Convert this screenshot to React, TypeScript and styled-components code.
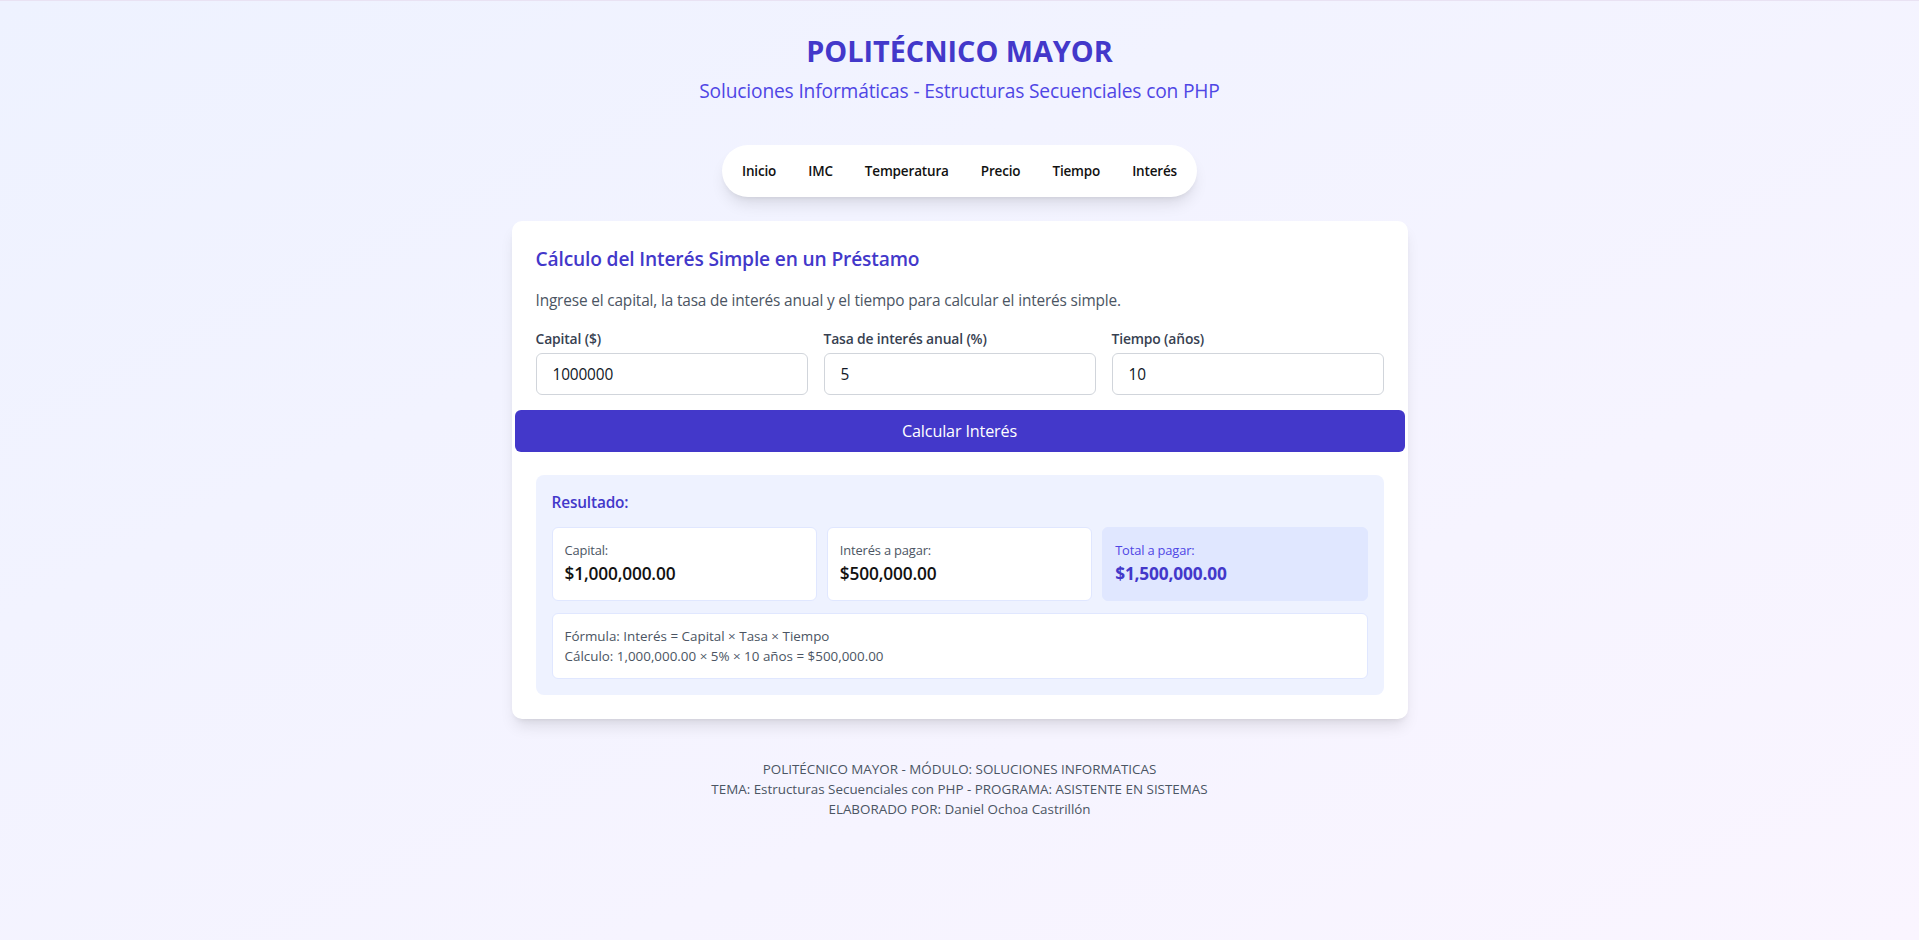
import React from "react";
import styled, { createGlobalStyle } from "styled-components";

const GlobalStyle = createGlobalStyle`
  html, body {
    margin: 0;
    padding: 0;
  }
  body {
    font-family: "Open Sans", "Noto Sans", Arial, sans-serif;
    letter-spacing: -0.01em;
    -webkit-font-smoothing: antialiased;
  }
  * {
    box-sizing: border-box;
  }
`;

const Page = styled.div`
  min-height: 100vh;
  border-top: 1px solid #e9e2f3;
  background: linear-gradient(to bottom right, #eef2ff, #faf5ff);
  padding: 32px 16px;
`;

const Header = styled.header`
  text-align: center;
  margin-bottom: 40px;
`;

const Title = styled.h1`
  margin: 0 0 8px;
  font-size: 28.8px;
  line-height: 36px;
  font-weight: 700;
  letter-spacing: 0;
  color: #4338ca;
`;

const Subtitle = styled.p`
  margin: 0;
  font-size: 19.2px;
  line-height: 28px;
  color: #4f46e5;
`;

const NavWrap = styled.div`
  display: flex;
  justify-content: center;
  margin-bottom: 24px;
`;

const Nav = styled.nav`
  display: flex;
  background: #ffffff;
  border-radius: 9999px;
  padding: 8px 4px;
  box-shadow: 0 10px 15px -3px rgba(0, 0, 0, 0.1), 0 4px 6px -4px rgba(0, 0, 0, 0.1);
`;

const NavLink = styled.a`
  padding: 8px 16px;
  font-size: 13.5px;
  line-height: 20px;
  font-weight: 600;
  color: #111111;
  text-decoration: none;
  cursor: pointer;
`;

const Card = styled.main`
  max-width: 896px;
  margin: 0 auto;
  background: #ffffff;
  border-radius: 10px;
  padding: 24px;
  box-shadow: 0 10px 15px -3px rgba(0, 0, 0, 0.1), 0 4px 6px -4px rgba(0, 0, 0, 0.1);
`;

const CardTitle = styled.h2`
  margin: 0 0 16px;
  font-size: 19.2px;
  line-height: 28px;
  font-weight: 600;
  color: #4338ca;
`;

const Description = styled.p`
  margin: 0 0 16px;
  font-size: 15.4px;
  line-height: 24px;
  color: #4b5563;
`;

const FieldGrid = styled.div`
  display: grid;
  grid-template-columns: repeat(3, 1fr);
  gap: 16px;
`;

const Field = styled.div`
  display: flex;
  flex-direction: column;
`;

const Label = styled.label`
  display: block;
  margin-bottom: 4px;
  font-size: 13.9px;
  line-height: 20px;
  font-weight: 600;
  color: #374151;
`;

const Input = styled.input`
  width: 100%;
  height: 42px;
  padding: 8px 16px;
  border: 1px solid #d1d5db;
  border-radius: 6px;
  font-family: inherit;
  font-size: 15.4px;
  letter-spacing: -0.01em;
  color: #111827;
  background: #ffffff;
  outline: none;
`;

const Button = styled.button`
  display: block;
  width: calc(100% + 42px);
  height: 42px;
  margin: 15px -21px 0;
  border: none;
  border-radius: 6px;
  background: #4338ca;
  color: #ffffff;
  font-family: inherit;
  font-size: 16.2px;
  letter-spacing: -0.01em;
  cursor: pointer;
`;

const Result = styled.section`
  margin-top: 23px;
  background: #eef2ff;
  border-radius: 8px;
  padding: 16px;
`;

const ResultTitle = styled.h3`
  margin: 0 0 12px;
  font-size: 15.4px;
  line-height: 24px;
  font-weight: 600;
  color: #4338ca;
`;

const StatGrid = styled.div`
  display: grid;
  grid-template-columns: repeat(3, 1fr);
  gap: 10px;
`;

const Stat = styled.div<{ $highlight?: boolean }>`
  padding: 12px;
  border-radius: 6px;
  border: 1px solid #e0e7ff;
  background: ${(p) => (p.$highlight ? "#e0e7ff" : "#ffffff")};
`;

const StatLabel = styled.div<{ $highlight?: boolean }>`
  font-size: 12.9px;
  line-height: 20px;
  color: ${(p) => (p.$highlight ? "#4f46e5" : "#4b5563")};
`;

const StatValue = styled.div<{ $highlight?: boolean }>`
  font-size: 17.3px;
  line-height: 28px;
  font-weight: ${(p) => (p.$highlight ? 700 : 600)};
  color: ${(p) => (p.$highlight ? "#4338ca" : "#111111")};
`;

const Formula = styled.div`
  margin-top: 12px;
  padding: 12px;
  background: #ffffff;
  border: 1px solid #e0e7ff;
  border-radius: 6px;
  font-size: 13.4px;
  line-height: 20px;
  letter-spacing: 0;
  color: #4b5563;
`;

const Footer = styled.footer`
  margin-top: 40px;
  text-align: center;
  font-size: 13.4px;
  line-height: 20px;
  letter-spacing: 0;
  color: #4b5563;
`;

const navItems = ["Inicio", "IMC", "Temperatura", "Precio", "Tiempo", "Interés"];

const stats = [
  { label: "Capital:", value: "$1,000,000.00" },
  { label: "Interés a pagar:", value: "$500,000.00" },
  { label: "Total a pagar:", value: "$1,500,000.00", highlight: true },
];

export default function App() {
  return (
    <>
      <GlobalStyle />
      <Page>
        <Header>
          <Title>POLITÉCNICO MAYOR</Title>
          <Subtitle>Soluciones Informáticas - Estructuras Secuenciales con PHP</Subtitle>
        </Header>
        <NavWrap>
          <Nav>
            {navItems.map((item) => (
              <NavLink key={item}>{item}</NavLink>
            ))}
          </Nav>
        </NavWrap>
        <Card>
          <CardTitle>Cálculo del Interés Simple en un Préstamo</CardTitle>
          <Description>
            Ingrese el capital, la tasa de interés anual y el tiempo para calcular el interés simple.
          </Description>
          <FieldGrid>
            <Field>
              <Label>Capital ($)</Label>
              <Input defaultValue="1000000" />
            </Field>
            <Field>
              <Label>Tasa de interés anual (%)</Label>
              <Input defaultValue="5" />
            </Field>
            <Field>
              <Label>Tiempo (años)</Label>
              <Input defaultValue="10" />
            </Field>
          </FieldGrid>
          <Button>Calcular Interés</Button>
          <Result>
            <ResultTitle>Resultado:</ResultTitle>
            <StatGrid>
              {stats.map((s) => (
                <Stat key={s.label} $highlight={s.highlight}>
                  <StatLabel $highlight={s.highlight}>{s.label}</StatLabel>
                  <StatValue $highlight={s.highlight}>{s.value}</StatValue>
                </Stat>
              ))}
            </StatGrid>
            <Formula>
              <div>Fórmula: Interés = Capital × Tasa × Tiempo</div>
              <div>Cálculo: 1,000,000.00 × 5% × 10 años = $500,000.00</div>
            </Formula>
          </Result>
        </Card>
        <Footer>
          <div>POLITÉCNICO MAYOR - MÓDULO: SOLUCIONES INFORMATICAS</div>
          <div>TEMA: Estructuras Secuenciales con PHP - PROGRAMA: ASISTENTE EN SISTEMAS</div>
          <div>ELABORADO POR: Daniel Ochoa Castrillón</div>
        </Footer>
      </Page>
    </>
  );
}
